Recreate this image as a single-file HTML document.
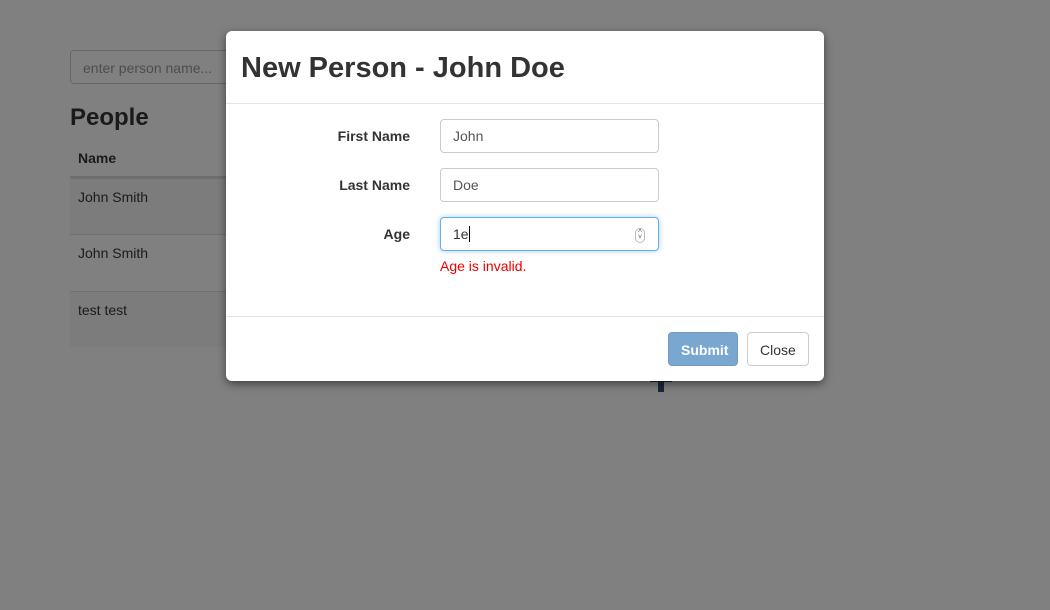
<!DOCTYPE html>
<html><head><style>
body{margin:0;width:1050px;height:610px;background:#808080;font-family:"Liberation Sans",sans-serif;font-size:14px;color:#1a1a1a;position:relative;overflow:hidden}
.search{position:absolute;left:70px;top:50px;width:170px;height:34px;border:1px solid #666;border-radius:4px;box-sizing:border-box;color:#4d4d4d;padding:9px 12px;font-size:14px}
h2{position:absolute;left:70px;top:104px;margin:0;font-size:24px;font-weight:bold;color:#1a1a1a}
.th{position:absolute;left:78px;top:150px;font-weight:bold}
.hl{position:absolute;left:70px;width:160px;top:176px;height:2px;background:#6e6e6e}
.row{position:absolute;left:70px;width:160px;height:56px;border-top:1px solid #707070;box-sizing:border-box;padding:10px 8px}
.s{background:#7c7c7c}
.plus{position:absolute;background:#1b2638}
.modal{position:absolute;left:226px;top:31px;width:598px;height:350px;background:#fff;border-radius:6px;box-shadow:0 3px 9px rgba(0,0,0,.5)}
.title{position:absolute;left:15px;top:21px;font-size:29px;font-weight:bold;color:#333;margin:0}
.line{position:absolute;left:0;width:598px;height:1px;background:#e5e5e5}
.lab{position:absolute;right:414px;font-weight:bold;color:#333}
.inp{position:absolute;left:214px;width:219px;height:34px;border:1px solid #ccc;border-radius:4px;box-sizing:border-box;padding:8px 12px;color:#555;font-size:14px}
.err{position:absolute;left:214px;top:227px;color:#e00;font-size:14px}
.btn{position:absolute;top:301px;height:34px;border-radius:4px;box-sizing:border-box;padding:9px 12px;font-size:14px}
</style></head><body>
<div class="search">enter person name...</div>
<h2>People</h2>
<div class="th">Name</div>
<div class="hl"></div>
<div class="row s" style="top:178px;padding-top:10px">John Smith</div>
<div class="row" style="top:234px">John Smith</div>
<div class="row s" style="top:291px">test test</div>
<div class="plus" style="left:650px;top:376px;width:22px;height:6px"></div>
<div class="plus" style="left:658px;top:370px;width:6px;height:22px"></div>
<div class="modal">
<div class="title">New Person - John Doe</div>
<div class="line" style="top:72px"></div>
<div class="lab" style="top:97px">First Name</div>
<div class="inp" style="top:88px">John</div>
<div class="lab" style="top:146px">Last Name</div>
<div class="inp" style="top:137px">Doe</div>
<div class="lab" style="top:195px">Age</div>
<div class="inp" style="top:186px;border-color:#66afe9;box-shadow:0 0 6px rgba(102,175,233,.6);color:#333">1e<span style="display:inline-block;width:1px;height:16px;background:#000;vertical-align:-3px"></span>
<span style="position:absolute;right:13px;top:10px;width:8px;height:13px;border:1px solid #bbb;border-radius:5px;font-size:7px;line-height:6px;text-align:center;color:#555">˄<br>˅</span></div>
<div class="err">Age is invalid.</div>
<div class="line" style="top:285px"></div>
<div class="btn" style="left:442px;width:70px;background:#7aa7cf;color:#fff;font-weight:bold;border:1px solid #6f9cc6">Submit</div>
<div class="btn" style="left:521px;width:62px;border:1px solid #ccc;color:#333">Close</div>
</div>
</body></html>
